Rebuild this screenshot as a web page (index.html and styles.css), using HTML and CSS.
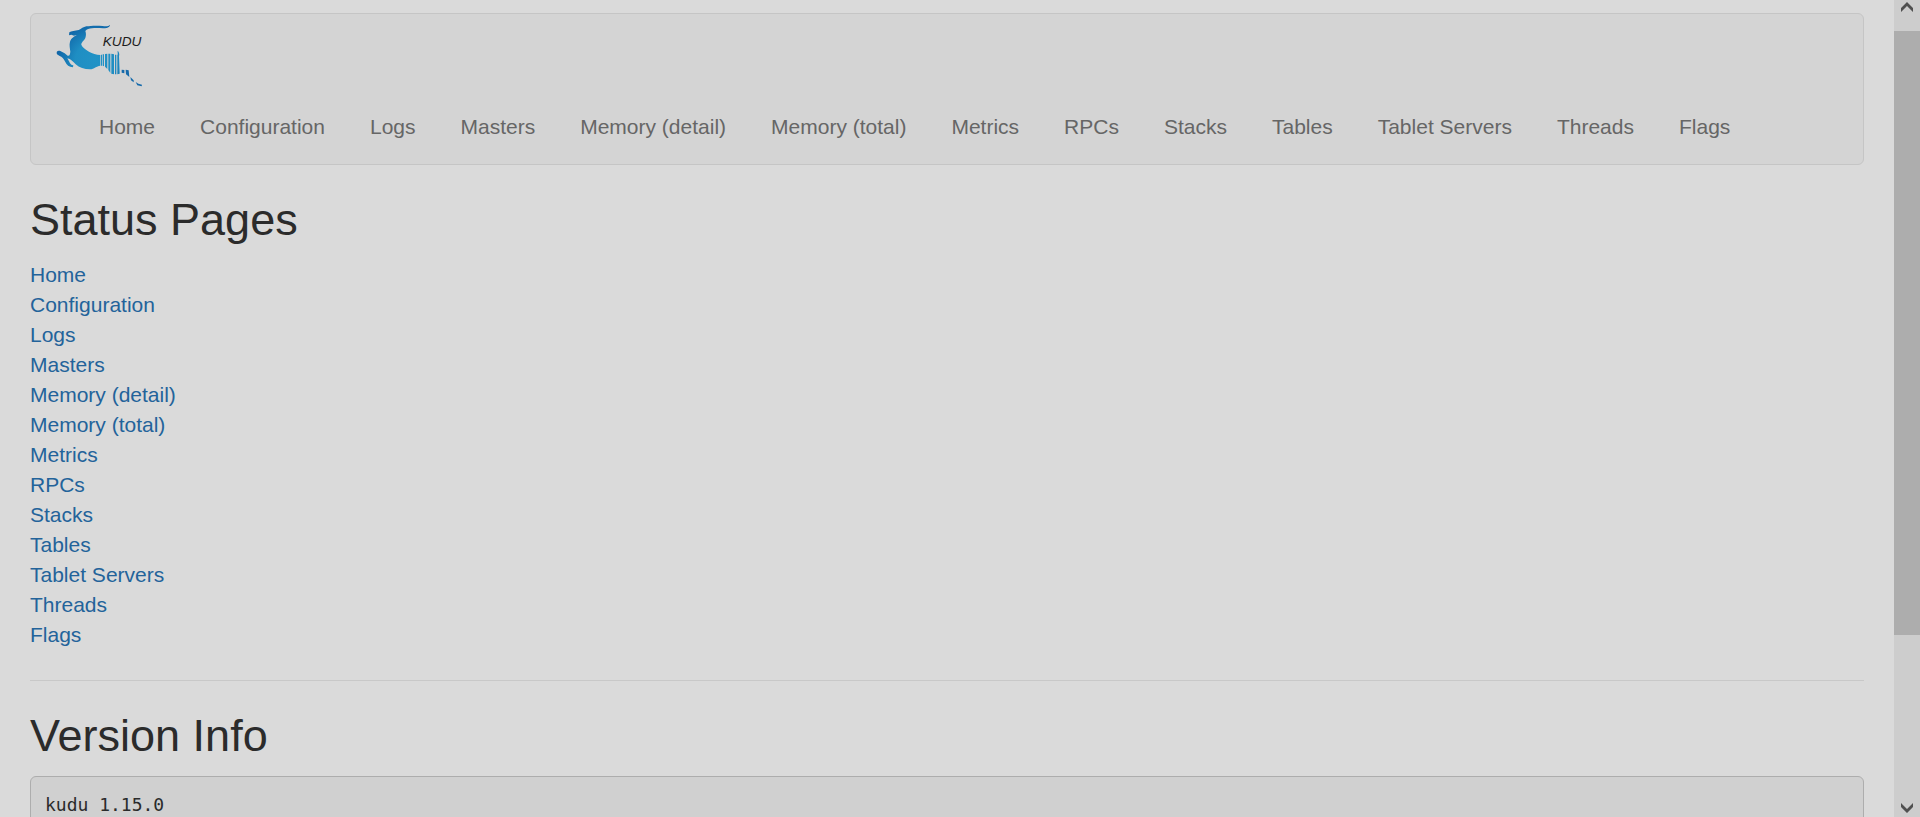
FILE: index.html
```
<!DOCTYPE html>
<html lang="en">
<head>
    <meta charset="utf-8">
    <title>Kudu</title>
    <link rel="stylesheet" href="styles.css">
</head>
<body>
    <div class="page">
        <nav class="navbar">
            <a class="navbar-brand" href="/" aria-label="Kudu">
                <svg class="logo" viewBox="108 54 261 192">
                    <defs>
                        <radialGradient id="hide" gradientUnits="userSpaceOnUse" cx="225" cy="170" r="120">
                            <stop offset="0" stop-color="#2193c6"/>
                            <stop offset="0.5" stop-color="#1f8ec3"/>
                            <stop offset="1" stop-color="#0f62a5"/>
                        </radialGradient>
                    </defs>
                    <g fill="url(#hide)">
                        <!-- horns, head, body and front legs -->
                        <path d="M270 59 C266 64 258 65 248 63 C230 61 212 62 199 64 C190 66 184 71 176 75 C165 78 154 78 148 82 L147 91 L154 89 L162 92 L172 89 C164 93 153 99 150 110 C147 121 150 129 151 140 C150 150 148 153 143 152 L134 145 L121 138 C112 135 108 141 111 148 L119 153 C126 155 131 161 136 171 C140 180 147 186 159 187 L160 181 C153 181 150 176 147 169 L142 160 C152 162 159 170 167 178 C178 188 193 193 210 193 C223 192 229 183 241 182 L241 150 C229 149 217 146 207 140 C196 133 186 126 184 119 C183 113 192 107 196 99 C199 91 198 84 196 78 C200 73 208 71 216 70 C231 68 248 71 260 69 C266 67 270 64 270 59 Z"/>
                        <!-- stripes -->
                        <path d="M243 149 H246 V182 H243 Z"/>
                        <path d="M248 148 H252 V184 L248 182 Z"/>
                        <path d="M255 147 L262 146 V192 L255 185 Z"/>
                        <path d="M265 146 H271 V204 L265 195 Z"/>
                        <path d="M274 146 L282 148 V208 L274 206 Z"/>
                        <path d="M285 149 H289 V208 H285 Z"/>
                        <path d="M293 137 C297 141 299 147 297 154 L299 206 L292 208 V151 C295 147 292 142 293 137 Z"/>
                    </g>
                    <!-- back leg -->
                    <g fill="#156aab">
                        <path d="M305 194 L313 195 V205 L305 203 Z"/>
                        <path d="M317 194 L326 196 L328 216 L318 208 Z"/>
                        <path d="M331 216 L341 226 L341 232 L333 226 Z"/>
                        <path d="M347 231 L355 236 L366 239 L365 244 L352 241 Z"/>
                    </g>
                    <text class="logo-text" x="248" y="122">KUDU</text>
                </svg>
            </a>
            <ul class="nav">
                <li><a href="/">Home</a></li>
                <li><a href="/config">Configuration</a></li>
                <li><a href="/logs">Logs</a></li>
                <li><a href="/masters">Masters</a></li>
                <li><a href="/mem-trackers">Memory (detail)</a></li>
                <li><a href="/memz">Memory (total)</a></li>
                <li><a href="/metrics">Metrics</a></li>
                <li><a href="/rpcz">RPCs</a></li>
                <li><a href="/stacks">Stacks</a></li>
                <li><a href="/tables">Tables</a></li>
                <li><a href="/tablet-servers">Tablet Servers</a></li>
                <li><a href="/threadz">Threads</a></li>
                <li><a href="/varz">Flags</a></li>
            </ul>
        </nav>

        <h2>Status Pages</h2>
        <ul class="status-pages">
            <li><a href="/">Home</a></li>
            <li><a href="/config">Configuration</a></li>
            <li><a href="/logs">Logs</a></li>
            <li><a href="/masters">Masters</a></li>
            <li><a href="/mem-trackers">Memory (detail)</a></li>
            <li><a href="/memz">Memory (total)</a></li>
            <li><a href="/metrics">Metrics</a></li>
            <li><a href="/rpcz">RPCs</a></li>
            <li><a href="/stacks">Stacks</a></li>
            <li><a href="/tables">Tables</a></li>
            <li><a href="/tablet-servers">Tablet Servers</a></li>
            <li><a href="/threadz">Threads</a></li>
            <li><a href="/varz">Flags</a></li>
        </ul>

        <hr>

        <h2>Version Info</h2>
        <pre>kudu 1.15.0</pre>
    </div>

    <div class="scrollbar">
        <button class="scroll-button" aria-label="Scroll up">
            <svg viewBox="0 0 12 10"><path d="M0 6 L6 0 L12 6 V10 L6 4 L0 10 Z"/></svg>
        </button>
        <div class="scroll-track">
            <div class="scroll-thumb"></div>
        </div>
        <button class="scroll-button scroll-down" aria-label="Scroll down">
            <svg viewBox="0 0 12 10"><path d="M0 0 L6 6 L12 0 V4 L6 10 L0 4 Z"/></svg>
        </button>
    </div>
</body>
</html>
```
FILE: styles.css
```
* {
    box-sizing: border-box;
}
body {
    display: flex;
    height: 100vh;
    margin: 0;
    overflow: hidden;
    background-color: #dadada;
    color: #2b2b2b;
    font-family: "Liberation Sans", Arial, sans-serif;
    font-size: 21px;
    line-height: 30px;
}
a {
    color: #23639a;
    text-decoration: none;
}
a:hover {
    text-decoration: underline;
}
ul {
    list-style: none;
    margin: 0;
    padding: 0;
}
h2 {
    margin: 30px 0 16px;
    font-size: 45px;
    font-weight: normal;
    line-height: 49px;
}
hr {
    margin: 30px 0;
    border: 0;
    border-top: 1px solid #c8c8c8;
}
pre {
    min-height: 300px;
    margin: 0;
    padding: 14px;
    background-color: #d0d0d0;
    border: 1px solid #adadad;
    border-radius: 6px;
    font-family: "DejaVu Sans Mono", monospace;
    font-size: 18px;
    line-height: 28px;
}

.page {
    flex: 1;
    min-width: 0;
    padding: 13px 30px 0;
    overflow: hidden;
}

/* navbar */
.navbar {
    padding: 9px 25px 22px;
    background-color: #d4d4d4;
    border: 1px solid #c5c5c5;
    border-radius: 6px;
}
.navbar-brand {
    display: block;
    height: 74px;
}
.logo {
    display: block;
    width: 87px;
    height: 64px;
}
.logo-text {
    fill: #1c1c1c;
    font-family: "Liberation Sans", Arial, sans-serif;
    font-size: 41px;
    font-style: italic;
}
.nav {
    display: flex;
    flex-wrap: wrap;
    padding: 15px 20px 0;
}
.nav a {
    display: block;
    padding: 0 22px 0 23px;
    color: #666;
}

/* scrollbar */
.scrollbar {
    display: flex;
    flex-direction: column;
    width: 26px;
    background-color: #cdcdcd;
}
.scroll-button {
    display: flex;
    justify-content: center;
    align-items: flex-start;
    height: 31px;
    padding: 2px 0 0;
    border: 0;
    background: none;
}
.scroll-button svg {
    width: 12px;
    height: 10px;
    fill: #505050;
}
.scroll-down {
    align-items: flex-end;
    padding: 0 0 4px;
}
.scroll-track {
    flex: 1;
}
.scroll-thumb {
    height: 80%;
    background-color: #adadad;
}
```
